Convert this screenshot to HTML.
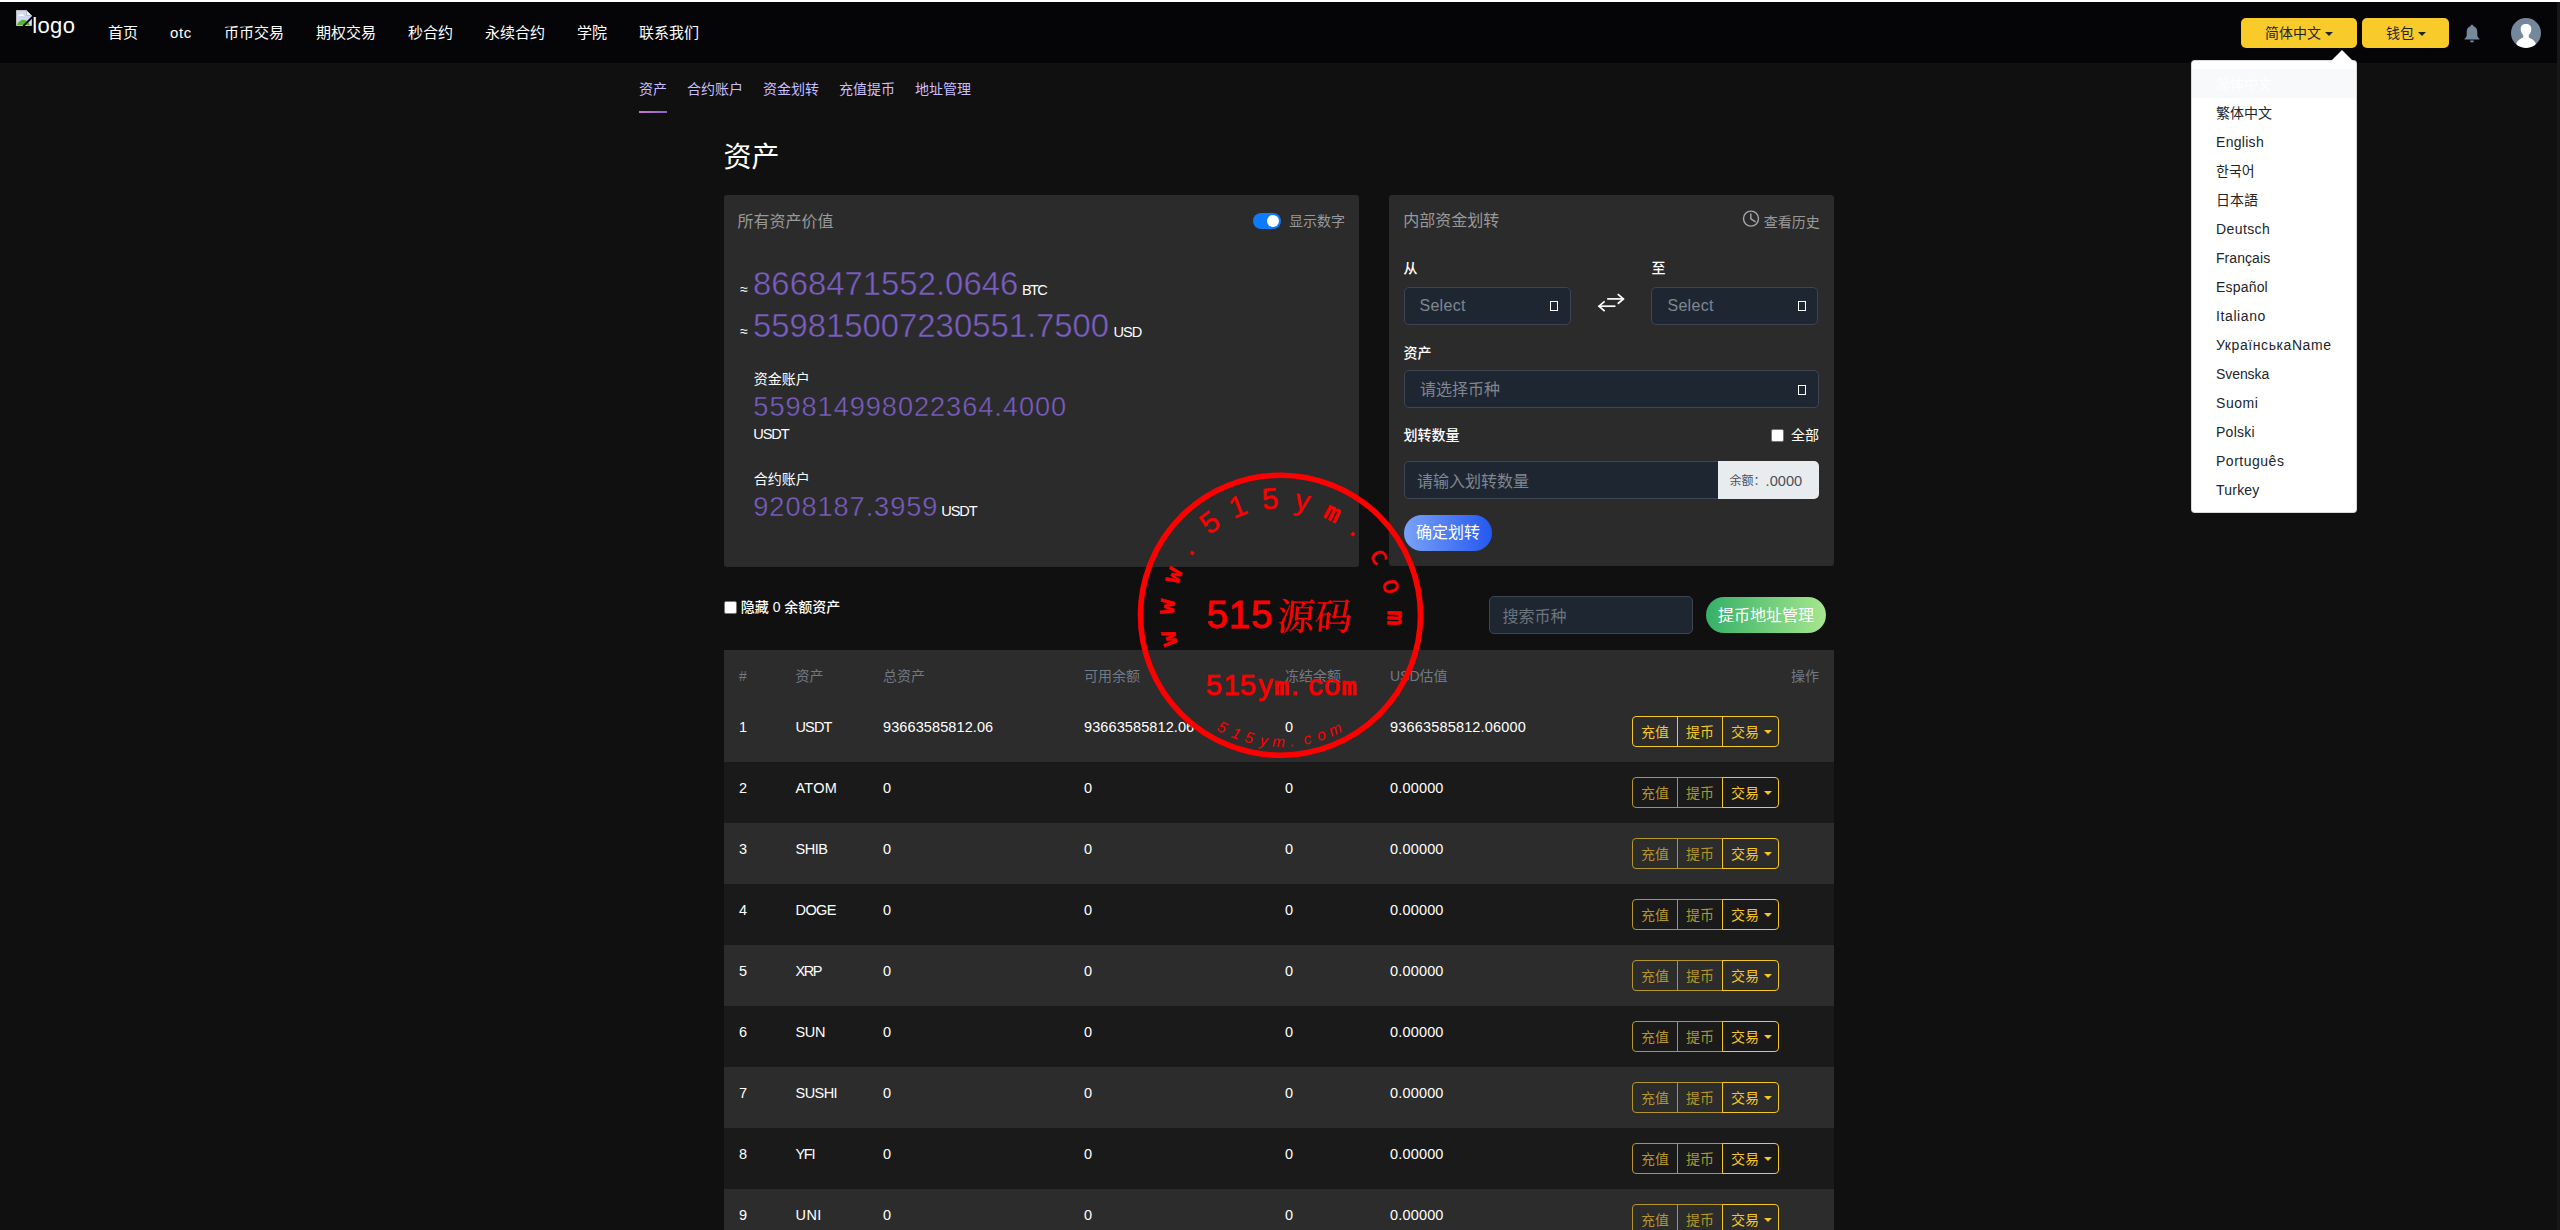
<!DOCTYPE html>
<html lang="zh-CN">
<head>
<meta charset="utf-8">
<title>资产</title>
<style>
*{box-sizing:border-box}
html,body{margin:0;padding:0}
body{width:2560px;height:1230px;overflow:hidden;position:relative;background:#101010;color:#fff;font-family:"Liberation Sans","Noto Sans CJK SC",sans-serif;font-size:15px;-webkit-font-smoothing:antialiased}
.t{position:absolute;white-space:nowrap;margin:0}
.abs{position:absolute}
.thin{-webkit-text-stroke:0.45px #2b2b2b}
.topline{left:0;top:0;width:2560px;height:2px;background:#fff}
.header{left:0;top:2px;width:2560px;height:61px;background:#050508}
.sbar{left:2557px;top:2px;width:3px;height:1228px;background:#171717}
.nav{position:absolute;left:92px;top:3px;height:60px;display:flex;margin:0;padding:0;list-style:none}
.nav li{padding:0 16px;font-size:15px;line-height:60px;white-space:nowrap;color:#fff}
.hbtn{position:absolute;top:18px;height:30px;border-radius:5px;background:#f8cb2b;color:#212529;font-size:14px;line-height:30px;white-space:nowrap}
.caret{position:absolute;width:0;height:0;border-left:4px solid transparent;border-right:4px solid transparent;border-top:4px solid currentColor}
.dd{position:absolute;left:2191px;top:60px;width:166px;height:453px;background:#fff;border:1px solid rgba(0,0,0,.15);border-radius:4px;padding:8px 0;margin:0;list-style:none;color:#212529;font-size:14px}
.dd li{height:29px;line-height:28px;padding:1px 0 0 24px;white-space:nowrap}
.dd li.act{background:#f8f9fa;color:#fff}
.dd-arrow{position:absolute;left:2330.6px;top:50px;width:0;height:0;border-left:11px solid transparent;border-right:11px solid transparent;border-bottom:11px solid #fff}
.card{position:absolute;background:#2b2b2b;border-radius:3px}
.sel{position:absolute;height:38px;background:#1e2632;border:1px solid #3f4455;border-radius:5px}
.gbox{position:absolute;width:8px;height:10px;border:1.5px solid #fff}
.cb{position:absolute;width:13px;height:13px;background:#fff;border:1px solid #767676;border-radius:2px}
.pill{position:absolute;border-radius:18px;color:#fff;font-size:16px;white-space:nowrap;text-align:center}
table.tb{position:absolute;left:724px;top:650px;width:1110px;border-collapse:collapse;table-layout:fixed}
table.tb th{height:51px;padding:15.6px 0 14.4px 15px;font-size:14px;line-height:21px;font-weight:400;color:#707a85;text-align:left;vertical-align:top;white-space:nowrap}
table.tb td{height:61px;padding:15px 0 0 15px;font-size:14.5px;line-height:22px;color:#fff;vertical-align:top;white-space:nowrap;position:relative}
table.tb tr{background:#1a1a1a}
table.tb tr.o{background:#2c2c2c}
.bg{position:absolute;left:55px;top:15px;height:31px;display:flex}
.bg span{display:block;height:31px;border:1px solid #f5c827;color:#f5c827;font-size:14px;line-height:29px;padding:0.8px 8px 0;margin-left:-1px;white-space:nowrap;position:relative}
.bg span:first-child{margin-left:0;border-radius:4px 0 0 4px;width:46px}
.bg span:nth-child(2){width:46px}
.bg span:last-child{border-radius:0 4px 4px 0;width:57px}
.bg span.dis{color:#b4952a;border-color:#b4952a}
.bg .caret{left:40.5px;top:13px}
</style>
</head>
<body>
<div class="abs topline"></div>
<header>
<div class="abs header"></div>
<svg class="abs" style="left:16px;top:10px" width="16" height="16" viewBox="0 0 16 16">
<defs><clipPath id="pgc"><path d="M1 1H10.3L15 5.7V15H1Z"/></clipPath></defs>
<path d="M0.5 0.5H10.5L15.5 5.5V15.5H0.5Z" fill="#cfd8f5" stroke="#bcbcbc"/>
<g clip-path="url(#pgc)"><ellipse cx="7.4" cy="16.2" rx="6.4" ry="6.4" fill="#5ab233"/>
<path d="M2.2 6C2.2 5 3.4 4.6 4.2 5C4.6 3.4 6.6 3.2 7.2 4.8C8.2 4.6 8.4 5.6 8 6Z" fill="#fff"/></g>
<path d="M10.5 0.5V5.5H15.5Z" fill="#f2f2f2" stroke="#b4b4b4" stroke-width=".8" stroke-linejoin="round"/>
<path d="M16.4 7L7.2 16.2" stroke="#050508" stroke-width="1.8"/>
</svg>
<div class="t" style="left:32.2px;top:13.2px;font-size:22px;line-height:26px;color:#fff;letter-spacing:0.402px">logo</div>
<ul class="nav">
<li>首页</li>
<li style="letter-spacing:0.661px">otc</li>
<li>币币交易</li>
<li>期权交易</li>
<li>秒合约</li>
<li>永续合约</li>
<li>学院</li>
<li>联系我们</li>
</ul>
<div class="hbtn" style="left:2241px;width:116px;padding-left:24px">简体中文<i class="caret" style="left:84px;top:13.5px"></i></div>
<div class="hbtn" style="left:2362px;width:87px;padding-left:24px">钱包<i class="caret" style="left:55.5px;top:13.5px"></i></div>
<svg class="abs" style="left:2464px;top:24px" width="16" height="19" viewBox="0 0 16 19">
<path d="M8 0.8C8.9 0.8 9.5 1.4 9.5 2.2C12 2.9 13.3 5 13.3 7.6V11.2C13.3 12.6 14.2 13.6 15.4 14.6V15.6H0.6V14.6C1.8 13.6 2.7 12.6 2.7 11.2V7.6C2.7 5 4 2.9 6.5 2.2C6.5 1.4 7.1 0.8 8 0.8Z" fill="#768a9c"/>
<path d="M6 16.4H10C10 17.6 9.1 18.4 8 18.4C6.9 18.4 6 17.6 6 16.4Z" fill="#768a9c"/>
</svg>
<svg class="abs" style="left:2511px;top:18px" width="30" height="30" viewBox="0 0 30 30">
<defs><clipPath id="avc"><circle cx="15" cy="15" r="15"/></clipPath></defs>
<circle cx="15" cy="15" r="15" fill="#75889b"/>
<g clip-path="url(#avc)" fill="#fff">
<path d="M15 6C18.4 6 20.4 8 20.3 11.2C20.2 13.6 19.2 15.6 17.8 17V19.6C20.6 21 23.4 22.4 24.6 25L25 31H5L5.4 25C6.6 22.4 9.4 21 12.2 19.6V17C10.8 15.6 9.8 13.6 9.7 11.2C9.6 8 11.6 6 15 6Z"/>
</g></svg>
<ul class="dd">
<li class="act">简体中文</li>
<li>繁体中文</li>
<li style="letter-spacing:0.297px">English</li>
<li style="font-family:&quot;Liberation Sans&quot;,&quot;Noto Sans CJK KR&quot;,sans-serif">한국어</li>
<li style="font-family:&quot;Liberation Sans&quot;,&quot;Noto Sans CJK JP&quot;,sans-serif">日本語</li>
<li style="letter-spacing:0.406px">Deutsch</li>
<li style="letter-spacing:0.064px">Français</li>
<li style="letter-spacing:0.187px">Español</li>
<li style="letter-spacing:0.605px">Italiano</li>
<li style="letter-spacing:0.582px">УкраїнськаName</li>
<li style="letter-spacing:-0.072px">Svenska</li>
<li style="letter-spacing:0.543px">Suomi</li>
<li style="letter-spacing:0.257px">Polski</li>
<li style="letter-spacing:0.508px">Português</li>
<li style="letter-spacing:0.22px">Turkey</li>
</ul>
<div class="dd-arrow"></div>
</header>
<main>
<nav>
<div class="t" style="left:639px;top:78.9px;font-size:14px;line-height:20px;color:#c8bfff">资产</div>
<div class="t" style="left:687px;top:78.9px;font-size:14px;line-height:20px;color:#c8bfff">合约账户</div>
<div class="t" style="left:763px;top:78.9px;font-size:14px;line-height:20px;color:#c8bfff">资金划转</div>
<div class="t" style="left:839px;top:78.9px;font-size:14px;line-height:20px;color:#c8bfff">充值提币</div>
<div class="t" style="left:915px;top:78.9px;font-size:14px;line-height:20px;color:#c8bfff">地址管理</div>
<div class="abs" style="left:639px;top:111px;width:28px;height:2px;background:linear-gradient(90deg,#d070d0,#8868c0)"></div>
</nav>
<h1 class="t" style="left:723.6px;top:140.2px;font-size:28px;line-height:36px;color:#fff;font-weight:400">资产</h1>
<section>
<div class="card" style="left:724px;top:195px;width:635px;height:372px"></div>
<div class="t" style="left:737.5px;top:210px;font-size:16px;line-height:24px;color:#999">所有资产价值</div>
<div class="abs" style="left:1253px;top:213px;width:28px;height:16px;border-radius:8px;background:#0d7bff"><i class="abs" style="left:14px;top:2px;width:12px;height:12px;border-radius:6px;background:#fff"></i></div>
<div class="t" style="left:1289px;top:210.5px;font-size:14px;line-height:20px;color:#999">显示数字</div>
<div class="t" style="left:740.3px;top:279.4px;font-size:14px;line-height:20px;color:#fff">≈</div>
<div class="t thin" style="left:753.074px;top:262.335px;font-size:32.8px;line-height:43px;color:#7b5ec2;letter-spacing:0.048px">8668471552.0646</div>
<div class="t" style="left:1022px;top:280.141px;font-size:14.6px;line-height:20px;color:#fff;letter-spacing:-1.663px">BTC</div>
<div class="t" style="left:740.3px;top:321.4px;font-size:14px;line-height:20px;color:#fff">≈</div>
<div class="t thin" style="left:753.074px;top:304.135px;font-size:32.8px;line-height:43px;color:#7b5ec2;letter-spacing:0.016px">559815007230551.7500</div>
<div class="t" style="left:1113.4px;top:321.941px;font-size:14.6px;line-height:20px;color:#fff;letter-spacing:-0.938px">USD</div>
<div class="t" style="left:753.75px;top:369.2px;font-size:14px;line-height:20px;color:#fff">资金账户</div>
<div class="t thin" style="left:753.326px;top:388.775px;font-size:27.2px;line-height:35px;color:#7b5ec2;letter-spacing:0.947px">559814998022364.4000</div>
<div class="t" style="left:753.2px;top:423.941px;font-size:14.6px;line-height:20px;color:#fff;letter-spacing:-1.084px">USDT</div>
<div class="t" style="left:753.75px;top:468.5px;font-size:14px;line-height:20px;color:#fff">合约账户</div>
<div class="t thin" style="left:753.326px;top:488.775px;font-size:27.2px;line-height:35px;color:#7b5ec2;letter-spacing:0.925px">9208187.3959</div>
<div class="t" style="left:941.2px;top:500.641px;font-size:14.6px;line-height:20px;color:#fff;letter-spacing:-1.084px">USDT</div>
</section>
<section>
<div class="card" style="left:1389px;top:195px;width:445px;height:371px"></div>
<div class="t" style="left:1403.25px;top:209px;font-size:16px;line-height:24px;color:#999">内部资金划转</div>
<svg class="abs" style="left:1742px;top:210px" width="18" height="18" viewBox="0 0 18 18" fill="none" stroke="#a5a5b0" stroke-width="1.4">
<circle cx="9" cy="8.6" r="7.5"/><path d="M8.8 4V8.8L13.2 11.6" stroke-linecap="round" stroke-linejoin="round"/></svg>
<div class="t" style="left:1763.75px;top:211.5px;font-size:14px;line-height:20px;color:#999">查看历史</div>
<div class="t" style="left:1403.5px;top:258.2px;font-size:14px;line-height:20px;color:#fff;font-weight:500">从</div>
<div class="t" style="left:1651.5px;top:258.2px;font-size:14px;line-height:20px;color:#fff;font-weight:500">至</div>
<div class="sel" style="left:1404px;top:287px;width:167px"></div>
<div class="sel" style="left:1651px;top:287px;width:167px"></div>
<div class="t" style="left:1419.4px;top:294.3px;font-size:16px;line-height:24px;color:#7f8791;letter-spacing:0.322px">Select</div>
<div class="t" style="left:1667.4px;top:294.3px;font-size:16px;line-height:24px;color:#7f8791;letter-spacing:0.322px">Select</div>
<i class="gbox" style="left:1549.5px;top:300.5px"></i>
<i class="gbox" style="left:1797.5px;top:300.5px"></i>
<svg class="abs" style="left:1596px;top:292px" width="30" height="22" viewBox="0 0 30 22" fill="none" stroke="#fff" stroke-width="1.7" stroke-linecap="square" stroke-linejoin="miter">
<path d="M12 6.9H27"/><path d="M22.4 2.6L27.4 6.9L22.4 11.2"/>
<path d="M18.6 14.2H3.4"/><path d="M8 9.9L3 14.2L8 18.5"/></svg>
<div class="t" style="left:1403.5px;top:342.5px;font-size:14px;line-height:20px;color:#fff;font-weight:500">资产</div>
<div class="sel" style="left:1404px;top:370px;width:415px"></div>
<div class="t" style="left:1420px;top:377.8px;font-size:16px;line-height:24px;color:#7f8791">请选择币种</div>
<i class="gbox" style="left:1797.5px;top:385px"></i>
<div class="t" style="left:1403.5px;top:425px;font-size:14px;line-height:20px;color:#fff;font-weight:500">划转数量</div>
<i class="cb" style="left:1771px;top:429px"></i>
<div class="t" style="left:1791px;top:425px;font-size:14px;line-height:20px;color:#fff">全部</div>
<div class="sel" style="left:1404px;top:461px;width:315px;border-radius:5px 0 0 5px"></div>
<div class="t" style="left:1417px;top:469.8px;font-size:16px;line-height:24px;color:#7f8791">请输入划转数量</div>
<div class="abs" style="left:1718px;top:461px;width:101px;height:38px;background:#e9ecef;border-radius:0 5px 5px 0"></div>
<div class="t" style="left:1729.6px;top:472.4px;font-size:12px;line-height:18px;color:#495057">余额：</div>
<div class="t" style="left:1765.6px;top:470px;font-size:14.6px;line-height:22px;color:#495057;letter-spacing:0.014px">.0000</div>
<div class="pill" style="left:1404px;top:515px;width:88px;height:36px;line-height:36px;background:linear-gradient(90deg,#7aa2f7,#2458f0)">确定划转</div>
</section>
<section>
<i class="cb" style="left:724px;top:600.5px"></i>
<div class="t" style="left:740.75px;top:597.4px;font-size:14px;line-height:20px;color:#fff;font-weight:500">隐藏 0 余额资产</div>
<div class="sel" style="left:1489px;top:596px;width:204px"></div>
<div class="t" style="left:1502.6px;top:605.2px;font-size:16px;line-height:24px;color:#6c757d">搜索币种</div>
<div class="pill" style="left:1706px;top:597px;width:120px;height:36px;line-height:37px;background:linear-gradient(90deg,#35b068,#a6e78e)">提币地址管理</div>
<table class="tb"><colgroup><col style="width:56.5px"><col style="width:87.5px"><col style="width:201px"><col style="width:201px"><col style="width:105px"><col style="width:202px"><col style="width:257px"></colgroup>
<thead><tr class="o"><th>#</th><th>资产</th><th>总资产</th><th>可用余额</th><th>冻结余额</th><th>USD估值</th><th style="text-align:right;padding-right:15px">操作</th></tr></thead><tbody>
<tr class="o"><td>1</td><td style="letter-spacing:-0.871px">USDT</td><td style="letter-spacing:0.102px">93663585812.06</td><td style="letter-spacing:0.102px">93663585812.06</td><td>0</td><td style="letter-spacing:0.173px">93663585812.06000</td><td><div class="bg"><span>充值</span><span>提币</span><span>交易<i class="caret"></i></span></div></td></tr>
<tr><td>2</td><td style="letter-spacing:0.259px">ATOM</td><td>0</td><td>0</td><td>0</td><td style="letter-spacing:0.168px">0.00000</td><td><div class="bg"><span class="dis">充值</span><span class="dis">提币</span><span>交易<i class="caret"></i></span></div></td></tr>
<tr class="o"><td>3</td><td style="letter-spacing:-0.461px">SHIB</td><td>0</td><td>0</td><td>0</td><td style="letter-spacing:0.168px">0.00000</td><td><div class="bg"><span class="dis">充值</span><span class="dis">提币</span><span>交易<i class="caret"></i></span></div></td></tr>
<tr><td>4</td><td style="letter-spacing:-0.576px">DOGE</td><td>0</td><td>0</td><td>0</td><td style="letter-spacing:0.168px">0.00000</td><td><div class="bg"><span class="dis">充值</span><span class="dis">提币</span><span>交易<i class="caret"></i></span></div></td></tr>
<tr class="o"><td>5</td><td style="letter-spacing:-1.409px">XRP</td><td>0</td><td>0</td><td>0</td><td style="letter-spacing:0.168px">0.00000</td><td><div class="bg"><span class="dis">充值</span><span class="dis">提币</span><span>交易<i class="caret"></i></span></div></td></tr>
<tr><td>6</td><td style="letter-spacing:-0.342px">SUN</td><td>0</td><td>0</td><td>0</td><td style="letter-spacing:0.168px">0.00000</td><td><div class="bg"><span class="dis">充值</span><span class="dis">提币</span><span>交易<i class="caret"></i></span></div></td></tr>
<tr class="o"><td>7</td><td style="letter-spacing:-0.546px">SUSHI</td><td>0</td><td>0</td><td>0</td><td style="letter-spacing:0.168px">0.00000</td><td><div class="bg"><span class="dis">充值</span><span class="dis">提币</span><span>交易<i class="caret"></i></span></div></td></tr>
<tr><td>8</td><td style="letter-spacing:-1.321px">YFI</td><td>0</td><td>0</td><td>0</td><td style="letter-spacing:0.168px">0.00000</td><td><div class="bg"><span class="dis">充值</span><span class="dis">提币</span><span>交易<i class="caret"></i></span></div></td></tr>
<tr class="o"><td>9</td><td style="letter-spacing:0.405px">UNI</td><td>0</td><td>0</td><td>0</td><td style="letter-spacing:0.168px">0.00000</td><td><div class="bg"><span class="dis">充值</span><span class="dis">提币</span><span>交易<i class="caret"></i></span></div></td></tr>
</tbody></table>
</section>
</main>
<div class="abs sbar"></div>
<svg class="abs" style="left:1130px;top:465px" width="300" height="300" viewBox="0 0 300 300" fill="#ff0000" font-family="Liberation Sans, sans-serif">
<circle cx="150.5" cy="150.25" r="140" fill="none" stroke="#ff0000" stroke-width="5.6"/>
<text font-size="29.5" stroke="#ff0000" stroke-width="0.4"><tspan x="47.48" y="179.43" rotate="-101.75" font-family="DejaVu Sans Mono, monospace" font-weight="700" font-size="25.2">w</tspan><tspan x="43.43" y="149.71" rotate="-85.65" font-family="DejaVu Sans Mono, monospace" font-weight="700" font-size="25.2">w</tspan><tspan x="47.78" y="120.04" rotate="-69.55" font-family="DejaVu Sans Mono, monospace" font-weight="700" font-size="25.2">w</tspan><tspan x="60.48" y="92.35" rotate="-53.45">.</tspan><tspan x="79.21" y="70.31" rotate="-37.35">5</tspan><tspan x="103.77" y="53.83" rotate="-21.25">1</tspan><tspan x="132.77" y="44.61" rotate="-5.15">5</tspan><tspan x="163.54" y="43.99" rotate="10.95">y</tspan><tspan x="192.29" y="51.67" rotate="27.05" font-family="DejaVu Sans Mono, monospace" font-weight="700" font-size="25.2">m</tspan><tspan x="218.36" y="67.48" rotate="43.15">.</tspan><tspan x="238.21" y="88.79" rotate="59.25" font-family="DejaVu Sans Mono, monospace" font-weight="400" font-size="26">c</tspan><tspan x="251.85" y="115.67" rotate="75.35" font-family="DejaVu Sans Mono, monospace" font-weight="400" font-size="26">o</tspan><tspan x="257.46" y="145.34" rotate="91.45" font-family="DejaVu Sans Mono, monospace" font-weight="700" font-size="25.2">m</tspan></text>
<text font-size="15.4" font-style="italic"><tspan x="85.92" y="265.12" rotate="27.40">5</tspan><tspan x="100.15" y="272.01" rotate="20.80">1</tspan><tspan x="113.86" y="276.83" rotate="14.20">5</tspan><tspan x="129.31" y="280.29" rotate="7.60">y</tspan><tspan x="142.02" y="281.82" rotate="1.00">m</tspan><tspan x="160.37" y="281.61" rotate="-5.60">.</tspan><tspan x="174.41" y="279.82" rotate="-12.20">c</tspan><tspan x="188.88" y="276.31" rotate="-18.80">o</tspan><tspan x="201.40" y="271.87" rotate="-25.40">m</tspan></text>
<text x="76.4" y="163.4" font-size="38.5" letter-spacing="0.85" stroke="#ff0000" stroke-width="0.9">515</text>
<text x="146.0" y="164.6" transform="translate(146.0 164.6) skewX(-5) translate(-146.0 -164.6)" font-family="Noto Serif CJK SC, serif" font-weight="500" font-size="37.4">源码</text>
<text y="230.3" font-size="29.2" stroke="#ff0000" stroke-width="0.7"><tspan x="75.73">5</tspan><tspan x="93.38">1</tspan><tspan x="109.63">5</tspan><tspan x="128.13">y</tspan><tspan x="143.88" font-family="DejaVu Sans Mono, monospace" font-weight="700" font-size="25.4" stroke-width="0.5">m</tspan><tspan x="160.63">.</tspan><tspan x="178.16">c</tspan><tspan x="193.97">o</tspan><tspan x="211.58" font-family="DejaVu Sans Mono, monospace" font-weight="700" font-size="25.4" stroke-width="0.5">m</tspan></text>
</svg>
</body>
</html>
